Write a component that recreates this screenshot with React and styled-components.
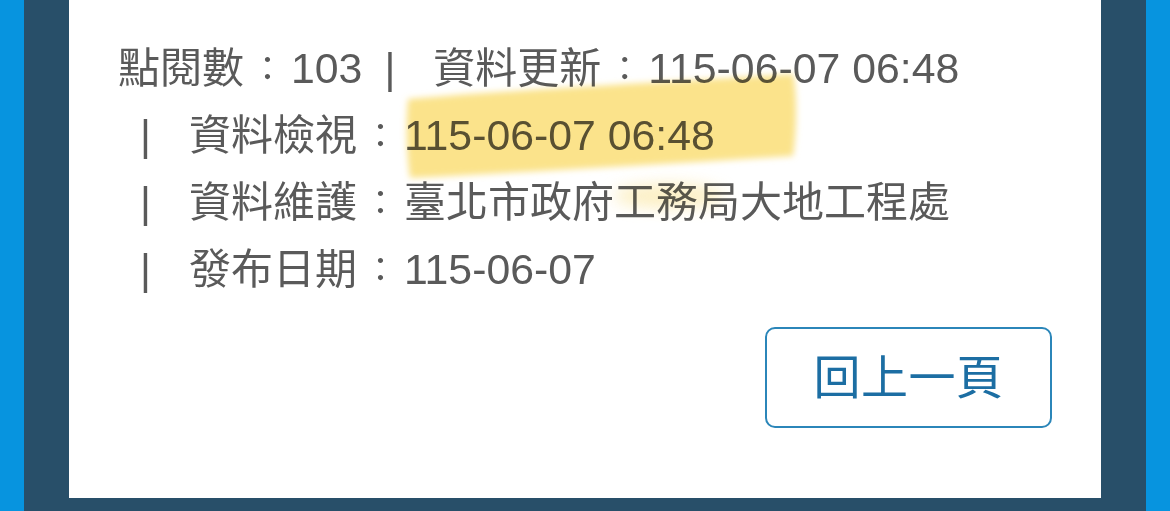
import React from 'react';
import styled, { createGlobalStyle } from 'styled-components';

const GlobalStyle = createGlobalStyle`
  html, body {
    margin: 0;
    padding: 0;
    background: #0794df;
  }
`

const Frame = styled.div`
  width: 1170px;
  height: 511px;
  box-sizing: border-box;
  padding: 0 24px;
  background: #0794df;
  display: flex;
  overflow: hidden;
`

const Panel = styled.div`
  flex: 1;
  background: #284f69;
  padding: 0 45px 13px 45px;
  display: flex;
`

const Card = styled.div`
  position: relative;
  flex: 1;
  background: #ffffff;
  padding: 35px 49px 0 49px;
  display: flex;
  flex-direction: column;
  font-family: "Liberation Sans", Arial, "Noto Sans CJK TC", sans-serif;
  color: #5a5a5a;
`

const Line = styled.div`
  height: 67px;
  font-size: 42px;
  line-height: 67px;
  white-space: nowrap;
`

const Sep = styled.span`
  display: inline-block;
  margin: 0 38px 0 22px;
`

const Colon = styled.span`
  display: inline-block;
  width: 47px;
  text-align: center;
  font-family: "Noto Sans CJK TC", sans-serif;
  font-size: 34px;
  line-height: 1;
  vertical-align: 2px;
`

const Num = styled.span`
  font-size: 42.8px;
`

const BackRow = styled.div`
  display: flex;
  justify-content: flex-end;
  margin-top: 24px;
`

const BackButton = styled.button`
  width: 287px;
  height: 101px;
  box-sizing: border-box;
  border: 2.5px solid #2b86b9;
  border-radius: 10px;
  background: #fff;
  color: #1c6ea3;
  font-family: "Noto Sans CJK TC", sans-serif;
  font-size: 47px;
  font-weight: 400;
  letter-spacing: 0.5px;
  cursor: pointer;
  padding: 0 0 9px 0;
`

const Marker = styled.svg`
  position: absolute;
  left: 0;
  top: 0;
  width: 100%;
  height: 100%;
  pointer-events: none;
  mix-blend-mode: multiply;
`

const rows = [
  { label: '資料檢視', value: <Num>115-06-07 06:48</Num> },
  { label: '資料維護', value: '臺北市政府工務局大地工程處' },
  { label: '發布日期', value: <Num>115-06-07</Num> },
]

export default function App() {
  return (
    <>
      <GlobalStyle />
      <Frame lang="zh-Hant">
        <Panel>
          <Card>
            <Line>
              點閱數<Colon>：</Colon><Num>103</Num><Sep>|</Sep>資料更新<Colon>：</Colon><Num>115-06-07 06:48</Num>
            </Line>
            {rows.map((r) => (
              <Line key={r.label}>
                <Sep>|</Sep>{r.label}<Colon>：</Colon>{r.value}
              </Line>
            ))}
            <BackRow>
              <BackButton>回上一頁</BackButton>
            </BackRow>
            {/* hand drawn highlighter marks */}
            <Marker viewBox="0 0 1032 498">
              <defs>
                <filter id="soft" x="-10%" y="-30%" width="120%" height="160%">
                  <feGaussianBlur stdDeviation="3" />
                </filter>
                <filter id="softer" x="-30%" y="-60%" width="160%" height="220%">
                  <feGaussianBlur stdDeviation="8" />
                </filter>
              </defs>
              <path
                d="M339 99 C420 92 560 84 660 78 L724 74 C728 90 728 130 724 156 C600 164 460 172 341 178 C337 150 337 120 339 99 Z"
                fill="#fbe38b"
                filter="url(#soft)"
              />
              <ellipse cx="600" cy="196" rx="55" ry="12" fill="#fbe8a8" opacity="0.7" filter="url(#softer)" />
            </Marker>
          </Card>
        </Panel>
      </Frame>
    </>
  );
}
